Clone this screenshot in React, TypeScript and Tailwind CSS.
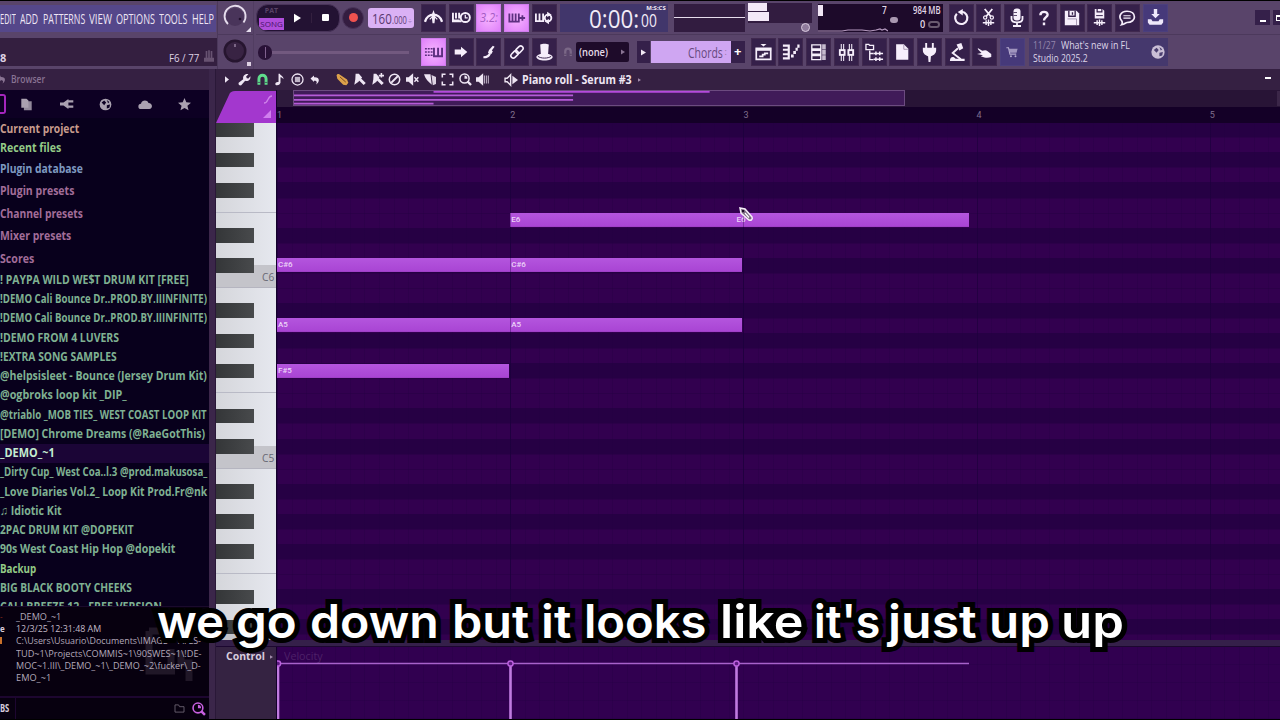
import { useLayoutEffect, useRef, useState, type ReactNode } from 'react'

const ROW = 15.07
const BAR = 233.2
const GRID_TOP = -0.8

// semitone 0 is C, the top visible key is A#6
const rows = Array.from({ length: 35 }, (_, i) => {
  const semitone = (((10 - i) % 12) + 12) % 12
  return { semitone, black: [1, 3, 6, 8, 10].includes(semitone) }
})

const notes = [
  { name: 'E6', row: 6, start: 1, length: 0.966 },
  { name: 'E6', row: 6, start: 1.966, length: 1.0 },
  { name: 'C#6', row: 9, start: 0, length: 1 },
  { name: 'C#6', row: 9, start: 1, length: 0.996 },
  { name: 'A5', row: 13, start: 0, length: 1 },
  { name: 'A5', row: 13, start: 1, length: 0.996 },
  { name: 'F#5', row: 16, start: 0, length: 0.996 },
]

const browserItems: { label: string; width: number; className: string }[] = [
  { label: 'Current project', width: 79, className: 'h-[19px] text-[#c79b8c]' },
  { label: 'Recent files', width: 61, className: 'h-[19px] text-[#93ca86]' },
  { label: 'Plugin database', width: 83, className: 'h-[22.5px] text-[#7d99c0]' },
  { label: 'Plugin presets', width: 74, className: 'h-[22.5px] text-[#a26d99]' },
  { label: 'Channel presets', width: 83, className: 'h-[22.5px] text-[#a26d99]' },
  { label: 'Mixer presets', width: 71, className: 'h-[22.5px] text-[#a26d99]' },
  { label: 'Scores', width: 34, className: 'h-[22.5px] text-[#a26d99]' },
  { label: '! PAYPA WILD WE$T DRUM KIT [FREE]', width: 189, className: 'h-[19.25px] text-[#7fb192]' },
  { label: '!DEMO Cali Bounce Dr..PROD.BY.IIINFINITE)', width: 207, className: 'h-[19.25px] text-[#7fb192]' },
  { label: '!DEMO Cali Bounce Dr..PROD.BY.IIINFINITE)', width: 207, className: 'h-[19.25px] text-[#7fb192]' },
  { label: '!DEMO FROM 4 LUVERS', width: 119, className: 'h-[19.25px] text-[#7fb192]' },
  { label: '!EXTRA SONG SAMPLES', width: 117, className: 'h-[19.25px] text-[#7fb192]' },
  { label: '@helpsisleet - Bounce (Jersey Drum Kit)', width: 207, className: 'h-[19.25px] text-[#7fb192]' },
  { label: '@ogbroks loop kit _DIP_', width: 127, className: 'h-[19.25px] text-[#7fb192]' },
  { label: '@triablo _MOB TIES_ WEST COAST LOOP KIT', width: 207, className: 'h-[19.25px] text-[#7fb192]' },
  { label: '[DEMO] Chrome Dreams (@RaeGotThis)', width: 205, className: 'h-[19.25px] text-[#7fb192]' },
  { label: '_DEMO_~1', width: 55, className: 'h-[19.25px] text-[#c4ecd0] bg-[#1b0536]' },
  { label: '_Dirty Cup_ West Coa..l.3 @prod.makusosa_', width: 207, className: 'h-[19.25px] text-[#7fb192]' },
  { label: '_Love Diaries Vol.2_ Loop Kit Prod.Fr@nk', width: 207, className: 'h-[19.25px] text-[#7fb192]' },
  { label: '♫ Idiotic Kit', width: 62, className: 'h-[19.25px] text-[#7fb192]' },
  { label: '2PAC DRUM KIT @DOPEKIT', width: 134, className: 'h-[19.25px] text-[#7fb192]' },
  { label: '90s West Coast Hip Hop @dopekit', width: 175, className: 'h-[19.25px] text-[#7fb192]' },
  { label: 'Backup', width: 36, className: 'h-[19.25px] text-[#93ca86]' },
  { label: 'BIG BLACK BOOTY CHEEKS', width: 132, className: 'h-[19.25px] text-[#7fb192]' },
  { label: 'CALI BREEZE 12 - FREE VERSION', width: 162, className: 'h-[19.25px] text-[#7fb192]' },
]

const caption: [string, number, string][] = [
  ['we', 67, 'ml-0'],
  ['go', 61, 'ml-[12px]'],
  ['down', 129, 'ml-[13px]'],
  ['but', 77, 'ml-[13px]'],
  ['it', 30, 'ml-[12px]'],
  ['looks', 123, 'ml-[13px]'],
  ['like', 83, 'ml-[13px]'],
  ["it's", 66, 'ml-[11px]'],
  ['just', 89, 'ml-[8px]'],
  ['up', 61, 'ml-[12px]'],
  ['up', 63, 'ml-[11px]'],
]

// Condenses a line of text so that it takes exactly `width` pixels
function Fit({ width, children, className = '' }: { width: number; children: ReactNode; className?: string }) {
  const ref = useRef<HTMLSpanElement>(null)
  const [scale, setScale] = useState(1)

  useLayoutEffect(() => {
    if (ref.current) setScale(width / ref.current.offsetWidth)
  }, [width])

  return (
    <span className={`block shrink-0 whitespace-pre ${className}`} style={{ width }}>
      <span ref={ref} className="inline-block origin-left" style={{ transform: `scaleX(${scale})` }}>
        {children}
      </span>
    </span>
  )
}

function Svg({ children, className = 'size-[19px]' }: { children: ReactNode; className?: string }) {
  return (
    <svg
      xmlns="http://www.w3.org/2000/svg"
      viewBox="0 0 20 20"
      fill="none"
      stroke="currentColor"
      strokeWidth={2}
      className={`shrink-0 ${className}`}
    >
      {children}
    </svg>
  )
}

const solid = { fill: 'currentColor', stroke: 'none' }

const icons = {
  metronome: (
    <>
      <path d="M1 14.500C2.500 10 6 7 10 7s7.500 3 9 7.500" strokeWidth="2.400" />
      <path d="M10 2l2 6-1 8H9L8 8z" {...solid} />
      <path d="M10 8l-4 4M10 8l4 4" strokeWidth="1.300" />
    </>
  ),
  countdown: (
    <>
      <path d="M1 5v9h9M4.200 5v6M7.500 5v6M1 13h7" />
      <circle cx="14" cy="10" r="4.800" />
      <path d="M14 7v3.500h2.500" strokeWidth="1.300" />
    </>
  ),
  stepPlus: <path d="M1.500 5v9h10.500V5M5 5v8M8.500 5v8M13 10h6M16 7v6" strokeWidth="2" />,
  loopRec: (
    <>
      <path d="M1 5v8.500h8V5M5 5v8" strokeWidth="2" />
      <circle cx="14.500" cy="10" r="3.700" />
      <path d="M13.500 3l5 3.300-5 2.700zM15.500 17l-5-3.300 5-2.700z" {...solid} />
    </>
  ),
  typing: (
    <>
      <path d="M10.500 5v9h8.500V5M14.800 5v8" strokeWidth="2" />
      <path d="M1 6h8M1 9.500h8M1 13h8" strokeDasharray="2 1" strokeWidth="1.600" />
    </>
  ),
  arrow: <path d="M1 6.500h9V2.500l9 7.500-9 7.500v-4H1z" {...solid} />,
  slide: (
    <>
      <path d="M2 17.500c5 0 8-1.500 9.500-6" strokeWidth="3.200" />
      <path d="M10 7l5.500-6 2.500 1.500L14 8l1.500 1-2 4-5-2z" {...solid} />
    </>
  ),
  link: (
    <g transform="rotate(-45 10 10)" strokeWidth="2">
      <rect x="0.500" y="7" width="10.500" height="6" rx="3" />
      <rect x="9" y="7" width="10.500" height="6" rx="3" />
    </g>
  ),
  hat: (
    <>
      <path d="M5.500 1.500c2-1 7-1 9 0l-.8 11c-2 1-5.500 1-7.500 0z" {...solid} />
      <path d="M5.500 11.500c-8 2.500-3 7 4.500 7s12.500-4.500 4.500-7" {...solid} />
      <path d="M3 14c3 2.500 11 2.500 14 0" stroke="#35204a" strokeWidth="1" />
    </>
  ),
  undo: (
    <>
      <path d="M4.500 5.500a7.200 7.200 0 1 0 6-2.200" strokeWidth="2.500" />
      <path d="M11.500 0v7.500L5.500 3.500z" {...solid} />
    </>
  ),
  cut: (
    <>
      <path d="M6 1l6.500 8M14 1L7.500 9" strokeWidth="1.900" />
      <circle cx="6.500" cy="10" r="1.700" strokeWidth="1.300" />
      <circle cx="13.500" cy="10" r="1.700" strokeWidth="1.300" />
      <path d="M4 15.500h12M7.500 13v5M10 12v7M12.500 13v5" strokeWidth="1.500" />
    </>
  ),
  mic: (
    <>
      <rect x="6.500" y="0.500" width="7" height="12" rx="3" {...solid} />
      <path d="M4.500 8v3c0 4.500 11 4.500 11 0V8M10 14v4M6 18h8" strokeWidth="1.800" />
      <path d="M6.500 4.500h3.500M6.500 7.500h3.500" stroke="#35204a" strokeWidth=".8" />
    </>
  ),
  help: <path d="M5.500 6.500c0-5.500 9-5.500 9-.5 0 3-4.500 3-4.500 7M10 15.500v3.500" strokeWidth="3" />,
  save: (
    <>
      <path d="M2 2h13l3 3v13H2z" {...solid} />
      <path d="M6.500 2v6h7V2M10.500 3.500v3" stroke="#35204a" strokeWidth="1.500" />
      <path d="M5 11h10v7" stroke="#8d7b9b" strokeWidth=".8" />
    </>
  ),
  saveNew: (
    <>
      <path d="M5 1h8l2 2v8H5z" {...solid} />
      <path d="M7.500 0v4h5V0" stroke="#35204a" strokeWidth="1.300" />
      <path d="M6.500 8h7" stroke="#35204a" strokeWidth="1" />
      <path d="M4 15.500h12M7.500 13v5M10 12v7M12.500 13v5" strokeWidth="1.500" />
    </>
  ),
  chat: (
    <>
      <path d="M10 2.500c11 0 11 12.500 0 12.500-1.500 0-2.500 2-6 2.500 1.200-1.500 1-2.500.3-4C0 9 2.500 2.500 10 2.500z" strokeWidth="1.900" />
      <path d="M6 7.500h8M6 10.200h8" strokeWidth="1.300" />
    </>
  ),
  download: (
    <>
      <path d="M8 0h4v6h3l-5 5-5-5h3z" {...solid} />
      <path d="M1 12h4l1.500 2.500h7L15 12h4v4l-2 2.500H3L1 16z" {...solid} />
    </>
  ),
  playlist: (
    <>
      <path d="M6.500 0h7L10 3z" {...solid} />
      <path d="M1.500 5h17v13h-17z" />
      <path d="M1 6.500h18" strokeWidth="3" />
      <path d="M5 14.500h4v-2h2.500V11h4" strokeWidth="2" />
    </>
  ),
  pianoRoll: (
    <>
      <path d="M1 3h6.500v14H1M1 7.500h6.500M1 12.500h6.500" strokeWidth="2.400" />
      <path d="M10 14.500h3M12.500 10.500h3M15 7h2.500M17 3.500h2.500" strokeWidth="3.400" />
    </>
  ),
  rack: (
    <>
      <path d="M2 2h10v4.500H2zM2 8h10v4.500H2zM2 14h10v4.500H2z" strokeWidth="1.500" />
      <path d="M13.500 1.500h4v5.500h-4zM13.500 7.500h4v5.500h-4zM13.500 13.500h4V19h-4z" {...solid} opacity=".75" />
    </>
  ),
  mixer: (
    <>
      <path d="M4.500 1v18M7 1v18M13 1v18M15.500 1v18" strokeWidth="1.100" />
      <rect x="3" y="7.500" width="5" height="5" fill="#35204a" />
      <rect x="12" y="7.500" width="5" height="5" fill="#35204a" />
    </>
  ),
  tree: (
    <>
      <path d="M1 1.500h3l1 1h4v4.500H1z" strokeWidth="1.400" />
      <path d="M5 8v9.500h4M5 11h4" strokeWidth="1.500" />
      <path d="M9 11h10M9 17h10M11.500 9v4M15.500 9v4M11.500 15v4M15.500 15v4" strokeWidth="1.600" />
    </>
  ),
  page: (
    <>
      <path d="M3.500 1.500H12l5 5V18.500H3.500z" {...solid} />
      <path d="M12 2v5h4.500" stroke="#8d7b9b" strokeWidth=".8" />
    </>
  ),
  plug: <path d="M5.500 0h2v5h5V0h2v5H17v2.500c0 4-3.500 5.500-5.500 6.500l-.5 6H9l-.5-6C6.500 13 3 11.500 3 7.500V5h2.500z" {...solid} />,
  lamp: (
    <>
      <path d="M10.500 5.500L5 10.500 13.500 17" strokeWidth="2" />
      <path d="M9 1.500l5-1.500 2 5.500-4 2.500z" {...solid} />
      <path d="M2 19c0-5 4-5 6-2.500h9.500V19z" {...solid} />
    </>
  ),
  hand: <path d="M1 4l6 3.500 4-.5c2 0 4 2 8 5v4c-3 1-6 1.500-9 .5l-5-1.500 3-1.500L0 12l6-1.500L1.500 6z" {...solid} />,
  cart: (
    <>
      <path d="M2 4h3l2 9h9" strokeWidth="1.500" />
      <path d="M5.500 5.500H18L16.500 11H7z" {...solid} opacity=".8" />
      <circle cx="8.500" cy="16" r="1.400" {...solid} />
      <circle cx="15" cy="16" r="1.400" {...solid} />
    </>
  ),
  wrench: <path d="M1 15l7-5.500c-1-5 3-9 8-7.500l-3.500 3.500 1 2.500 2.500.5L19 5c1 5.500-3.500 8.500-8 7l-6 7c-2.500 1-5-1.500-4-4z" {...solid} />,
  magnet: (
    <>
      <path d="M4.500 18V9c0-7.500 11-7.500 11 0v9" strokeWidth="4.500" />
      <path d="M2.500 14.500h4M13.500 14.500h4" stroke="#352042" strokeWidth="1" />
    </>
  ),
  note: <path d="M8.500 1h2c1 3 6.500 4 5.500 8.500-1.500-2-3-3-4.500-3V15c-1 4.500-8 5-8 2 0-2.500 3-4 5-3z" {...solid} />,
  stamp: (
    <>
      <circle cx="10" cy="10" r="8.500" strokeWidth="2" />
      <rect x="6" y="6" width="8" height="8" {...solid} opacity=".75" />
    </>
  ),
  curl: <path d="M1 7l7-6v3.500c11-1 13 8 4 14.500 3-5 1.500-8-4-7.500V14z" {...solid} />,
  tag: (
    <>
      <path d="M1 4c0-2 2-3 4-2l12 8 2 5-3 4-5-1L2 9z" {...solid} />
      <path d="M6 6l9 8" stroke="#7a4a20" strokeWidth="1.500" />
    </>
  ),
  brush: (
    <>
      <path d="M4 1h5l5 6-6 7-6 4 1.500-8z" {...solid} />
      <path d="M9 8l9 9" strokeWidth="4.500" />
    </>
  ),
  brushPlus: (
    <>
      <path d="M4 1h4l5 6-5 7-6 4 1.500-8z" {...solid} />
      <path d="M9 8l9 9" strokeWidth="4.500" />
      <path d="M12 4h8M16 0v7" strokeWidth="2.400" />
    </>
  ),
  ban: (
    <>
      <circle cx="10" cy="10" r="8" strokeWidth="2.300" />
      <path d="M5 15L15 5" strokeWidth="2.800" />
    </>
  ),
  mute: (
    <>
      <path d="M0 6.500h4l7-6v19l-7-6H0z" {...solid} />
      <path d="M13 6.500l6 7M19 6.500l-6 7" strokeWidth="2.200" />
    </>
  ),
  slice: (
    <>
      <path d="M0 2h10l2 16C7 14 2 9 0 2z" {...solid} />
      <path d="M11.500 3l7 3v11l-5 2z" {...solid} opacity=".9" />
    </>
  ),
  select: <path d="M2 7V2h5M13 2h5v5M18 13v5h-5M7 18H2v-5" strokeWidth="2.400" />,
  zoom: (
    <>
      <circle cx="8.500" cy="8.500" r="7" strokeWidth="2.300" />
      <path d="M13 13l5.500 5.500" strokeWidth="3.600" />
      <path d="M8.500 9V4a5 5 0 0 1 4.500 5z" {...solid} />
    </>
  ),
  playback: (
    <>
      <path d="M0 6.500h4l7-6v19l-7-6H0z" {...solid} />
      <path d="M13 4v12M16 4v12M19 4v12" strokeWidth="1.700" opacity=".7" />
    </>
  ),
  channel: (
    <>
      <path d="M1.500 7.500h3l5-5v15l-5-5h-3z" />
      <path d="M12 4l8 6-8 6z" {...solid} />
    </>
  ),
  globe: (
    <>
      <circle cx="10" cy="10" r="9.500" {...solid} />
      <path d="M4 7l4-3 3 3-3 4zM12 11l5-1-1 5-4 1zM12 3l4 3-2 2z" fill="#4b3f70" stroke="none" />
    </>
  ),
}

function ToolButton({ children, tone = 'dark' }: { children: ReactNode; tone?: 'dark' | 'lit' | 'blue' }) {
  const tones = {
    dark: 'bg-[#35204a] border-[#40294f] text-[#f6eefb]',
    lit: 'bg-[radial-gradient(#f7b4ff,#df80fa)] border-[#d07cee] text-[#5d2f80]',
    blue: 'bg-[#46397a] border-[#4b3f7d] text-[#eee8fb]',
  }
  return (
    <button className={`flex h-7 w-[25px] shrink-0 items-center justify-center border ${tones[tone]}`}>{children}</button>
  )
}

function Menu() {
  const items: [string, number, string][] = [
    ['EDIT', 16, 'ml-0'],
    ['ADD', 18, 'ml-1'],
    ['PATTERNS', 42, 'ml-[5px]'],
    ['VIEW', 23, 'ml-[4px]'],
    ['OPTIONS', 39, 'ml-[4px]'],
    ['TOOLS', 28, 'ml-[4px]'],
    ['HELP', 22, 'ml-[5px]'],
  ]
  return (
    <div className="w-[218px] shrink-0 border-r border-[#4b385b] bg-[#59446a]">
      <nav className="mt-1 flex h-[27px] w-[216px] items-center bg-[#55478a] text-[14px] font-medium text-[#eee6f4]">
        {items.map(([label, width, margin]) => (
          <Fit key={label} width={width} className={margin}>
            {label}
          </Fit>
        ))}
      </nav>
      <div className="mt-[6px] flex h-[28px] w-[217px] items-end bg-[#341f40] text-[11px] text-[#ded2e4]">
        <Fit width={6} className="font-bold">8</Fit>
        <Fit width={30} className="ml-[163px] font-medium">F6 / 77</Fit>
        <svg viewBox="0 0 12 14" className="mb-1 ml-[5px] h-[12px] w-[10px] text-[#685372]">
          <path d="M3 1v8M6 0v9M9 1v8M1 10h10v3H1z" stroke="currentColor" strokeWidth="2" fill="currentColor" />
        </svg>
      </div>
    </div>
  )
}

function Knobs() {
  return (
    <div className="flex w-9 shrink-0 flex-col border-r border-[#513d61] text-[#d8c8df]">
      <div className="flex h-[34px] items-center border-b border-[#4c395c] pl-[4px]">
        <svg viewBox="0 0 30 30" className="size-[30px]">
          <circle cx="13" cy="14" r="9" fill="#49345a" />
          <path d="M6 21a10.500 10.500 0 1 1 15.500-1.500" fill="none" stroke="#e6dded" strokeWidth="1.800" />
          <circle cx="18" cy="16" r="1.300" fill="#21102d" />
          <path d="M29 24v5h-5z" fill="#e6dded" />
        </svg>
      </div>
      <div className="flex h-[34px] items-center pl-[4px]">
        <svg viewBox="0 0 30 30" className="size-[30px]">
          <circle cx="13" cy="14" r="11.500" fill="#26152f" />
          <circle cx="13" cy="14" r="9" fill="#382343" />
          <path d="M13 7v3" stroke="#a18bab" strokeWidth="1.300" />
          <path d="M25 25h4v4h-4z" fill="#ddd0e2" />
        </svg>
      </div>
    </div>
  )
}

function Transport() {
  return (
    <div className="flex w-[167px] shrink-0 flex-col pl-[2px]">
      <div className="flex h-[34px] items-center border-b border-[#4c395c]">
        <div className="flex h-7 w-[84px] items-center overflow-hidden rounded-[12px] border border-[#49345a] bg-[#231233]">
          <div className="flex h-full w-[27px] flex-col pl-[2px]">
            <div className="flex h-[13px] items-center justify-center text-[7px] font-bold text-[#584266]">PAT</div>
            <div className="flex h-[12px] items-center justify-center bg-[#b04edb] text-[8px] text-[#461468]">SONG</div>
          </div>
          <div className="flex flex-1 items-center justify-center border-r border-[#34203f]">
            <svg viewBox="0 0 8 10" className="h-[10px] w-[7px] text-white"><path d="M0 0l8 5-8 5z" fill="currentColor" /></svg>
          </div>
          <div className="flex flex-1 items-center justify-center">
            <div className="size-[7px] rounded-[1px] bg-white" />
          </div>
        </div>
        <div className="ml-[2px] flex size-[22px] items-center justify-center rounded-full border border-[#49345a] bg-[#341d40]">
          <div className="size-[9px] rounded-full bg-[#f0524f]" />
        </div>
        <div className="ml-[4px] flex h-5 w-[46px] items-baseline rounded-[3px] bg-[#dab1f5] pl-1 text-[#5b3a72]">
          <Fit width={20} className="text-[15px] leading-5">160</Fit>
          <Fit width={15} className="text-[10px]">.000</Fit>
          <span className="ml-px text-[7px] text-[#9670ad]">÷</span>
        </div>
      </div>
      <div className="flex h-[34px] items-center pl-[2px]">
        <div className="flex h-[15px] w-[14px] items-center justify-center rounded-full bg-[#291237]">
          <div className="h-[11px] w-px bg-[#80618e]" />
        </div>
        <div className="h-[3px] w-[137px] bg-[#72597f]" />
      </div>
    </div>
  )
}

function UpperRow() {
  return (
    <div className="flex h-[34px] items-center border-b border-[#4c395c]">
      <div className="flex gap-[2.7px]">
        <ToolButton><Svg>{icons.metronome}</Svg></ToolButton>
        <ToolButton><Svg>{icons.countdown}</Svg></ToolButton>
        <ToolButton tone="lit"><Fit width={18} className="text-[13px] italic text-[#a45cc4]">3.2:</Fit></ToolButton>
        <ToolButton tone="lit"><Svg className="size-[18px]">{icons.stepPlus}</Svg></ToolButton>
        <ToolButton><Svg className="size-[18px]">{icons.loopRec}</Svg></ToolButton>
      </div>
      <div className="ml-[3px] flex h-7 w-[108px] items-center bg-[#41366b] text-[#f1ebf7]">
        <Fit width={50} className="ml-[29px] text-[26px] leading-7">0:00:</Fit>
        <div className="ml-px flex h-full w-[26px] flex-col items-end">
          <span className="mt-px text-[6px] font-bold leading-[7px]">M:S:CS</span>
          <Fit width={16} className="mr-[9px] text-[19px] leading-[17px]">00</Fit>
        </div>
      </div>
      <div className="ml-[6px] flex h-7 w-[71px] items-center bg-[#321c40]">
        <div className="h-px w-full bg-[#e7dcec]" />
      </div>
      <div className="ml-[3px] flex h-[29px] w-16 flex-col">
        <div className="flex h-5 flex-col gap-px bg-[#321c40]">
          <div className="h-2 w-[19px] bg-[#f3e8f7]" />
          <div className="h-[9px] w-[21px] bg-[#f3e8f7]" />
        </div>
        <div className="mr-[2px] size-[9px] self-end rounded-full border border-[#d8cade] bg-[#8f7a9c]" />
      </div>
      <div className="relative ml-[6px] flex h-7 w-[125px] bg-[#1d0a2a] text-[#e3d9e8]">
        <div className="mt-px h-[11px] w-[5px] bg-[#f1e6f5]" />
        <svg viewBox="0 0 70 6" className="absolute bottom-0 left-0 h-[6px] w-[70px]">
          <path d="M0 5h24l6-1h14l8 1 6-1 4-1 2 1 3-1 3 2" fill="none" stroke="#b59abf" strokeWidth="1.200" />
        </svg>
        <div className="ml-auto flex w-[61px] flex-col pr-[2px] text-[10px]">
          <div className="flex h-[13px] items-center justify-between">
            <Fit width={5} className="font-semibold">7</Fit>
            <Fit width={28} className="font-semibold">984 MB</Fit>
          </div>
          <div className="flex h-[15px] items-center pl-[8px]">
            <div className="mb-2 h-[6px] w-2 rounded-full bg-[#a998b0]" />
            <Fit width={5} className="ml-[22px] text-[11px] font-semibold">0</Fit>
            <div className="ml-[3px] h-[7px] w-3 rounded-full border-2 border-[#6a5a70]" />
          </div>
        </div>
      </div>
      <div className="ml-[6px] flex gap-[2.7px]">
        <ToolButton><Svg className="size-[17px]">{icons.undo}</Svg></ToolButton>
        <ToolButton><Svg>{icons.cut}</Svg></ToolButton>
        <ToolButton><Svg className="size-[20px]">{icons.mic}</Svg></ToolButton>
        <ToolButton><Svg className="size-[16px]">{icons.help}</Svg></ToolButton>
        <ToolButton><Svg className="size-[18px]">{icons.save}</Svg></ToolButton>
        <ToolButton><Svg>{icons.saveNew}</Svg></ToolButton>
        <ToolButton><Svg className="size-[18px]">{icons.chat}</Svg></ToolButton>
        <ToolButton tone="blue"><Svg className="size-[17px]">{icons.download}</Svg></ToolButton>
      </div>
      <div className="ml-auto flex gap-[3px]">
        <div className="flex h-[15px] w-[15px] items-end justify-center bg-[#35204a] pb-[3px]">
          <div className="h-[2px] w-[6px] bg-white" />
        </div>
        <div className="flex h-[15px] w-[7px] items-center bg-[#35204a] pl-[3px]">
          <div className="h-[6px] w-1 border border-r-0 border-t-2 border-white" />
        </div>
      </div>
    </div>
  )
}

function LowerRow() {
  return (
    <div className="flex h-[34px] items-center">
      <div className="flex gap-[2.7px]">
        <ToolButton tone="lit"><Svg>{icons.typing}</Svg></ToolButton>
        <ToolButton><Svg className="size-[14px]">{icons.arrow}</Svg></ToolButton>
        <ToolButton><Svg className="size-[14px]">{icons.slide}</Svg></ToolButton>
        <ToolButton><Svg className="size-[16px]">{icons.link}</Svg></ToolButton>
        <ToolButton><Svg>{icons.hat}</Svg></ToolButton>
      </div>
      <Svg className="ml-[6px] size-[10px] text-[#7b6887]">{icons.magnet}</Svg>
      <div className="ml-[3px] flex h-5 w-[53px] items-center rounded-[2px] bg-[#1e0b2a] pl-[3px] text-[11px] text-[#e5dce9]">
        <Fit width={29} className="font-semibold">(none)</Fit>
        <svg viewBox="0 0 5 6" className="ml-[13px] h-[6px] w-[4px]"><path d="M0 0l5 3-5 3z" fill="#8a7494" /></svg>
      </div>
      <div className="ml-2 flex h-[22px] w-[13px] items-center justify-center bg-[#35204a]">
        <svg viewBox="0 0 5 6" className="h-[7px] w-[5px]"><path d="M0 0l5 3-5 3z" fill="#f1e9f5" /></svg>
      </div>
      <div className="ml-px flex h-[22px] w-20 items-center justify-end bg-[#cfa6f2] pr-1 text-[14px] text-[#664a80]">
        <Fit width={35}>Chords</Fit>
        <span className="ml-px text-[9px] text-[#92749f]">:</span>
      </div>
      <div className="flex h-[22px] w-[14px] items-center justify-center bg-[#35204a] text-[13px] font-bold text-white">+</div>
      <div className="ml-[6px] flex gap-[2.7px]">
        <ToolButton><Svg className="size-[17px]">{icons.playlist}</Svg></ToolButton>
        <ToolButton><Svg className="size-[18px]">{icons.pianoRoll}</Svg></ToolButton>
        <ToolButton><Svg className="size-[18px]">{icons.rack}</Svg></ToolButton>
        <ToolButton><Svg>{icons.mixer}</Svg></ToolButton>
        <ToolButton><Svg>{icons.tree}</Svg></ToolButton>
        <ToolButton><Svg className="size-[18px]">{icons.page}</Svg></ToolButton>
        <ToolButton><Svg>{icons.plug}</Svg></ToolButton>
        <ToolButton><Svg>{icons.lamp}</Svg></ToolButton>
        <ToolButton><Svg className="size-[15px]">{icons.hand}</Svg></ToolButton>
        <ToolButton tone="blue"><Svg className="size-[14px] text-[#b7accf]">{icons.cart}</Svg></ToolButton>
      </div>
      <div className="ml-1 flex h-7 w-[139px] items-center bg-[#45386d] pl-1 text-[10px] font-medium leading-[13px] text-[#ded5e8]">
        <div className="w-[118px]">
          <div className="flex">
            <Fit width={23} className="text-[#9485ac]">11/27</Fit>
            <Fit width={69} className="ml-[5px]">What's new in FL</Fit>
          </div>
          <Fit width={55}>Studio 2025.2</Fit>
        </div>
        <Svg className="size-[14px] text-[#cabfd6]">{icons.globe}</Svg>
      </div>
    </div>
  )
}

function Browser() {
  return (
    <aside className="flex w-[209px] shrink-0 flex-col overflow-hidden bg-[#08001c]">
      <div className="flex h-[21px] shrink-0 items-center bg-[#352042] text-[10px] text-[#897393]">
        <Svg className="-ml-[3px] size-[9px]">{icons.curl}</Svg>
        <Fit width={34} className="ml-[5px] font-semibold">Browser</Fit>
      </div>
      <div className="flex h-7 shrink-0 items-center bg-[#0d0023] text-[#aaa1b0]">
        <div className="h-5 w-[6px] rounded-r-[3px] border-2 border-l-0 border-[#a425bd]" />
        <Svg className="ml-[14px] size-[13px]">
          <path d="M2 1h8l3 3v11H2z" {...solid} />
          <path d="M10 5h8v14H6v-4" {...solid} opacity=".85" />
        </Svg>
        <Svg className="ml-[27px] size-[14px]">
          <path d="M0 8h5l7-5v14l-7-5H0zM12 4.500h7v3.500h-7zM12 12h7v3.500h-7z" {...solid} />
        </Svg>
        <Svg className="ml-[25px] size-[13px]">
          <circle cx="10" cy="10" r="9" {...solid} />
          <path d="M4 7l4-3 3 3-3 4zM12 11l5-1-1 5-4 1zM12 3l4 3-2 2z" fill="#0d0023" stroke="none" />
        </Svg>
        <Svg className="ml-[26px] size-[15px]">
          <path d="M4 16a3.500 3.500 0 0 1 0-7c1-5 8-6 10-1 6 0 6 8 1 8z" {...solid} />
        </Svg>
        <Svg className="ml-[25px] size-[13px]">
          <path d="M10 0l2.800 6.700 7.200.6-5.500 4.700 1.700 7-6.200-3.800L3.800 19l1.700-7L0 7.300l7.200-.6z" {...solid} />
        </Svg>
      </div>
      <div className="flex h-[488px] shrink-0 flex-col overflow-hidden pt-[2px] text-[12.500px] font-bold">
        {browserItems.map(({ label, width, className }, i) => (
          <div key={i} className={`flex shrink-0 items-center ${className}`}>
            <Fit width={width}>{label}</Fit>
          </div>
        ))}
      </div>
      <div className="relative flex h-[90px] shrink-0 border-t border-[#1a0a2c] bg-[#07000f] pt-[4px] text-[9.500px] leading-[12.200px] text-[#b3a9ba]">
        <svg viewBox="0 0 50 56" className="absolute left-[145px] top-[20px] h-[56px] w-[50px]">
          <path d="M4 4h20M4 4v40h26M26 22v22M36 24v12h8v18" fill="none" stroke="#201727" strokeWidth="7" />
        </svg>
        <div className="relative flex w-4 flex-col gap-1 text-[8px] leading-[9px]">
          <div className="text-[#a3331f]">-</div>
          <div className="font-bold text-[#d7cbd9]">e</div>
          <div className="h-[7px] w-[2px] bg-[#c9702a]" />
        </div>
        <div className="relative">
          <Fit width={45}>_DEMO_~1</Fit>
          <Fit width={85} className="text-[#c3bac8]">12/3/25 12:31:48 AM</Fit>
          <Fit width={185}>C:\Users\Usuario\Documents\IMAGE-~1\FLS-</Fit>
          <Fit width={185}>TUD~1\Projects\COMMIS~1\90SWES~1\!DE-</Fit>
          <Fit width={185}>MOC~1.III\_DEMO_~1\_DEMO_~2\fucker\_D-</Fit>
          <Fit width={35}>EMO_~1</Fit>
        </div>
      </div>
      <div className="flex h-[23px] shrink-0 items-center border-t-2 border-[#1d0630] bg-[#07000f] text-[11px] text-[#d6cbdc]">
        <Fit width={9} className="font-bold">BS</Fit>
        <div className="ml-[6px] h-full w-px bg-[#1d0630]" />
        <svg viewBox="0 0 12 10" className="ml-[158px] h-[9px] w-[11px]">
          <path d="M1 1h4l1 2h5v6H1z" fill="none" stroke="#6c6272" />
        </svg>
        <Svg className="ml-[7px] size-[14px] text-[#c860e0]">{icons.zoom}</Svg>
      </div>
    </aside>
  )
}

function PianoToolbar() {
  const tools = [icons.tag, icons.brush, icons.brushPlus, icons.ban, icons.mute, icons.slice, icons.select, icons.zoom, icons.playback]
  const options = [icons.wrench, icons.magnet, icons.note, icons.stamp, icons.curl]
  return (
    <div className="flex h-[21px] shrink-0 items-center bg-[#352042] text-[#eee5f3]">
      <div className="ml-[2.300px] flex w-[17.600px] justify-center">
        <svg viewBox="0 0 5 8" className="h-[7px] w-[4px]"><path d="M0 0l5 4-5 4z" fill="currentColor" /></svg>
      </div>
      {options.map((icon, i) => (
        <div key={i} className={`flex w-[17.600px] justify-center ${i === 1 ? 'text-[#5fdc8c]' : ''}`}>
          <Svg className={i === 4 ? 'size-[10px]' : 'size-[13px]'}>{icon}</Svg>
        </div>
      ))}
      <div className="ml-[9.500px] flex">
        {tools.map((icon, i) => (
          <div key={i} className={`flex w-[17.600px] justify-center ${i === 0 ? 'text-[#dda14b]' : ''}`}>
            <Svg className="size-[13px]">{icon}</Svg>
          </div>
        ))}
      </div>
      <Svg className="ml-[12px] size-[14px]">{icons.channel}</Svg>
      <Fit width={110} className="ml-[4px] text-[11.500px] font-bold">Piano roll - Serum #3</Fit>
      <svg viewBox="0 0 5 6" className="ml-[6px] h-[6px] w-[3px]"><path d="M0 0l5 3-5 3z" fill="#a28cab" /></svg>
      <div className="mb-[3px] ml-auto mr-[9px] h-[2px] w-[6px] bg-white" />
    </div>
  )
}

function Overview() {
  return (
    <div className="flex h-[17px] shrink-0 bg-[#281436]">
      <div className="h-full w-4 bg-[#2d1a3c]" />
      <svg viewBox="0 0 612 16" className="h-4 w-[612px] border border-[#6c4b80] bg-[#401b59]" preserveAspectRatio="none">
        <path d="M140 1h277" stroke="#b54bdc" strokeWidth="2" />
        <path d="M0 5h280M0 10h280M0 14.500h140" stroke="#b65bd8" strokeWidth="2" />
      </svg>
      <div className="ml-auto mt-px h-[15px] w-[3px] bg-[#3b2648]" />
    </div>
  )
}

function Keyboard() {
  return (
    <div className="h-[517px] w-[60px] overflow-hidden bg-gradient-to-r from-[#d5d6db] to-[#e6e8ef]">
      <div className="flex flex-col" style={{ marginTop: GRID_TOP }}>
        {rows.map(({ semitone, black }, i) => (
          <div
            key={i}
            className={`relative flex shrink-0 ${semitone === 0 ? 'border-b border-[#b5b5c0] bg-[#c4c4ca]' : semitone === 5 ? 'border-b border-[#b9bac6]' : ''}`}
            style={{ height: ROW }}
          >
            {black && <div className="mt-[0.500px] h-[14.570px] w-[38px] bg-gradient-to-r from-[#343638] to-[#484a4c]" />}
            {semitone === 1 && <div className="mt-[7px] flex-1 bg-[#c4c4ca]" />}
            {semitone === 0 && i < 30 && (
              <Fit width={12} className="absolute -top-[3px] right-[2px] text-[11px] leading-[14px] text-[#686873]">
                {i < 15 ? 'C6' : 'C5'}
              </Fit>
            )}
          </div>
        ))}
      </div>
    </div>
  )
}

function NoteGrid() {
  return (
    <div className="relative h-[517px] flex-1 overflow-hidden border-l border-[#14002b] bg-[#30004e]">
      <div className="flex flex-col" style={{ marginTop: GRID_TOP }}>
        {rows.map(({ black }, i) => (
          <div key={i} className={`shrink-0 ${black ? 'bg-[#260044]' : 'border-t border-[#2c0049] bg-[#32004f]'}`} style={{ height: ROW }} />
        ))}
      </div>
      <div className="absolute inset-0 bg-[repeating-linear-gradient(90deg,#20004040_0px,#20004040_1px,transparent_1px,transparent_14.575px)]" />
      <div className="absolute inset-0 bg-[repeating-linear-gradient(90deg,#1c003c99_0px,#1c003c99_1px,transparent_1px,transparent_233.200px)]" />
      {notes.map(({ name, row, start, length }, i) => (
        <div
          key={i}
          className="absolute h-[14px] border-b border-[#a040c8] bg-gradient-to-b from-[#b455de] to-[#a945d4] pl-px font-['Roboto',sans-serif] text-[8px] font-medium leading-[14px] text-[#ecd3f8]"
          style={{ left: start * BAR, top: GRID_TOP + 0.2 + row * ROW, width: length * BAR }}
        >
          {name}
        </div>
      ))}
      {[1, 2].map((bar) => (
        <div key={bar} className="absolute top-0 h-full w-px bg-[#1c003c55]" style={{ left: bar * BAR }} />
      ))}
      <svg viewBox="0 0 16 16" className="absolute left-[462px] top-[84px] size-4">
        <path d="M1 1l5 1 7 8c1 2-1 4-3 3L2 6z" fill="#7b6a80" stroke="#f5eef7" strokeWidth="1.500" />
        <path d="M6 6l4 4.500" stroke="#fff" strokeWidth="1.200" />
        <circle cx="4" cy="4" r="1.200" fill="#1c0a28" />
      </svg>
    </div>
  )
}

function Velocity() {
  return (
    <div className="flex h-[72px] shrink-0 bg-[#352342]">
      <div className="flex w-[60px] items-start pl-[10px] pt-px text-[11px] text-[#d8cddd]">
        <Fit width={39} className="font-bold">Control</Fit>
        <svg viewBox="0 0 5 6" className="ml-[5px] mt-[6px] h-[6px] w-[3px]"><path d="M0 0l5 3-5 3z" fill="#a28cab" /></svg>
      </div>
      <div className="relative flex-1 border-l border-[#14002b] bg-[#310050]">
        <div className="absolute inset-0 bg-[repeating-linear-gradient(90deg,#20004040_0px,#20004040_1px,transparent_1px,transparent_14.575px)]" />
        <div className="absolute inset-0 bg-[repeating-linear-gradient(180deg,transparent_0px,transparent_17px,#20004040_17px,#20004040_18px)]" />
        <Fit width={39} className="relative ml-[7px] mt-px text-[11px] text-[#4e2169]">Velocity</Fit>
        <svg viewBox="0 0 1003 72" className="absolute left-0 top-0 h-[72px] w-[1003px]">
          <path d="M2 16.500h690" stroke="#a862cb" strokeWidth="1.600" />
          <path d="M1 17v55M233.500 18v54M459.500 18v54" stroke="#c07be0" strokeWidth="2.600" />
          {[1, 233.5, 459.5].map((x) => (
            <circle key={x} cx={x} cy="16.500" r="2.600" fill="#5b1a80" stroke="#bb60dd" strokeWidth="1.500" />
          ))}
        </svg>
      </div>
    </div>
  )
}

function PianoRoll() {
  return (
    <main className="flex min-w-0 flex-1 flex-col overflow-hidden">
      <PianoToolbar />
      <div className="flex h-[33px] shrink-0">
        <svg viewBox="0 0 60 33" className="h-[33px] w-[60px] bg-[#352042]">
          <path d="M0 33L13 5c1-3 3-4 6-4h41v32z" fill="#a337ce" />
          <path d="M48 13c5 0 3-7 8-7" fill="none" stroke="#cf82ea" strokeWidth="1.300" />
          <path d="M55 20v8h-8z" fill="#d07eee" />
        </svg>
        <div className="flex flex-1 flex-col border-l border-[#14002b]">
          <Overview />
          <div className="flex h-4 bg-[#140027] font-['Roboto',sans-serif] text-[9px] leading-[17px] text-[#80708e]">
            {[1, 2, 3, 4, 5].map((bar) => (
              <span key={bar} className={bar === 5 ? '' : 'w-[233.200px] shrink-0'}>{bar}</span>
            ))}
          </div>
        </div>
      </div>
      <div className="flex h-[517px] shrink-0">
        <Keyboard />
        <NoteGrid />
      </div>
      <div className="h-[7px] shrink-0 border-b border-[#1c0730] bg-[#35204a]" />
      <Velocity />
    </main>
  )
}

export default function App() {
  return (
    <div className="relative flex h-[720px] w-[1280px] flex-col overflow-hidden border-y border-black bg-[#352342] font-['Open_Sans',sans-serif] leading-normal">
      <header className="flex h-[68px] shrink-0 bg-[#59446a]">
        <Menu />
        <Knobs />
        <Transport />
        <div className="flex min-w-0 flex-1 flex-col">
          <UpperRow />
          <LowerRow />
        </div>
      </header>
      <div className="flex min-h-0 flex-1">
        <Browser />
        <div className="w-[7px] shrink-0 border-r border-[#2a1838] bg-[#3b264a]" />
        <PianoRoll />
      </div>
      <div className="absolute left-[157px] top-[589px] flex font-['Inter',sans-serif] text-[46px] font-semibold leading-[62px] text-white [-webkit-text-stroke:10px_black] [paint-order:stroke_fill] [stroke-linejoin:round]">
        {caption.map(([word, width, margin], i) => (
          <Fit key={i} width={width} className={margin}>
            {word}
          </Fit>
        ))}
      </div>
    </div>
  )
}
